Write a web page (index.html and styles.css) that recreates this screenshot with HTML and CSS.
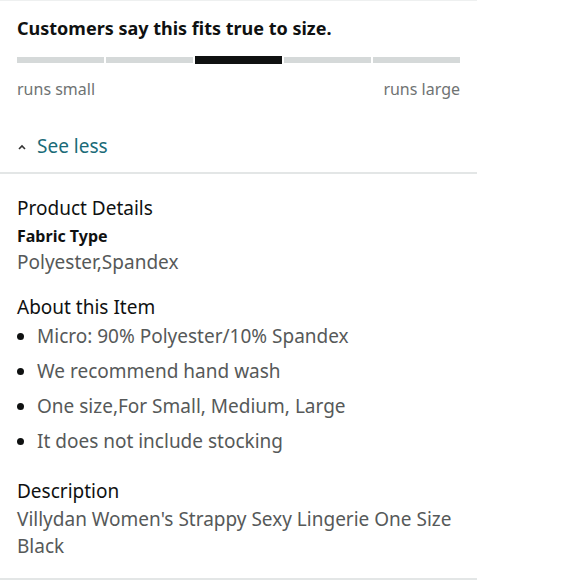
FILE: index.html
```html
<!DOCTYPE html>
<html>
<head>
<meta charset="utf-8">
<link rel="stylesheet" href="styles.css">
</head>
<body>
<div class="page">
  <section class="fit">
    <h2 class="fit-title">Customers say this fits true to size.</h2>
    <div class="fit-bar">
      <span class="seg"></span>
      <span class="seg"></span>
      <span class="seg seg-on"></span>
      <span class="seg"></span>
      <span class="seg"></span>
    </div>
    <div class="fit-labels">
      <span>runs small</span>
      <span>runs large</span>
    </div>
    <div class="see-less">
      <svg class="caret" width="8" height="6" viewBox="0 0 8 6"><path d="M1 5 L4 2 L7 5" fill="none" stroke="#333" stroke-width="1.6"/></svg>
      <span>See less</span>
    </div>
  </section>
  <section class="details">
    <h3 class="sec-title">Product Details</h3>
    <div class="label">Fabric Type</div>
    <div class="value fabric">Polyester,Spandex</div>

    <h3 class="sec-title about">About this Item</h3>
    <ul class="bullets">
      <li>Micro: 90% Polyester/10% Spandex</li>
      <li>We recommend hand wash</li>
      <li>One size,For Small, Medium, Large</li>
      <li>It does not include stocking</li>
    </ul>

    <h3 class="sec-title desc">Description</h3>
    <div class="value desc-text">Villydan Women's Strappy Sexy Lingerie One Size Black</div>
  </section>
</div>
</body>
</html>
```
FILE: styles.css
```css
html, body {
  margin: 0;
  padding: 0;
  background: #fff;
}
body {
  font-family: "Noto Sans", "Open Sans", sans-serif;
  color: #111;
}
.page {
  width: 477px;
  border-top: 1px solid #eef0f0;
}
.fit {
  padding: 15px 17px 0 17px;
  border-bottom: 2px solid #e3e6e6;
}
.fit-title {
  margin: 0;
  font-size: 18px;
  font-weight: 700;
  line-height: 24px;
  color: #0f1111;
}
.fit-bar {
  display: flex;
  gap: 2px;
  align-items: center;
  margin-top: 16px;
  height: 8px;
}
.seg {
  flex: 1;
  height: 6px;
  background: #d5d9d9;
}
.seg-on {
  height: 8px;
  background: #0f1111;
}
.fit-labels {
  display: flex;
  justify-content: space-between;
  margin-top: 14px;
  font-size: 16px;
  line-height: 22px;
  color: #6f7373;
}
.see-less {
  display: flex;
  align-items: center;
  gap: 11px;
  margin-top: 33px;
  padding-bottom: 13px;
  font-size: 19px;
  line-height: 26px;
  color: #1a6b78;
}
.caret {
  margin-left: 1px;
  margin-top: 2px;
}
.details {
  padding: 21px 17px 0 17px;
  border-bottom: 2px solid #e3e6e6;
  padding-bottom: 18px;
}
.sec-title {
  margin: 0;
  font-size: 19px;
  font-weight: 400;
  line-height: 26px;
  color: #0f1111;
}
.label {
  margin-top: 4px;
  font-size: 16px;
  font-weight: 700;
  line-height: 22px;
  color: #0f1111;
}
.value {
  font-size: 19px;
  line-height: 26px;
  color: #565959;
}
.fabric {
  margin-top: 2px;
}
.about {
  margin-top: 19px;
}
.bullets {
  margin: 3px 0 0 0;
  padding: 0 0 0 20px;
  font-size: 19px;
  line-height: 26px;
  color: #565959;
}
.bullets li {
  margin-bottom: 9px;
}
.bullets li::marker {
  color: #0f1111;
}
.desc {
  margin-top: 24px;
}
.desc-text {
  margin-top: 2px;
  width: 440px;
  line-height: 27px;
}
```
